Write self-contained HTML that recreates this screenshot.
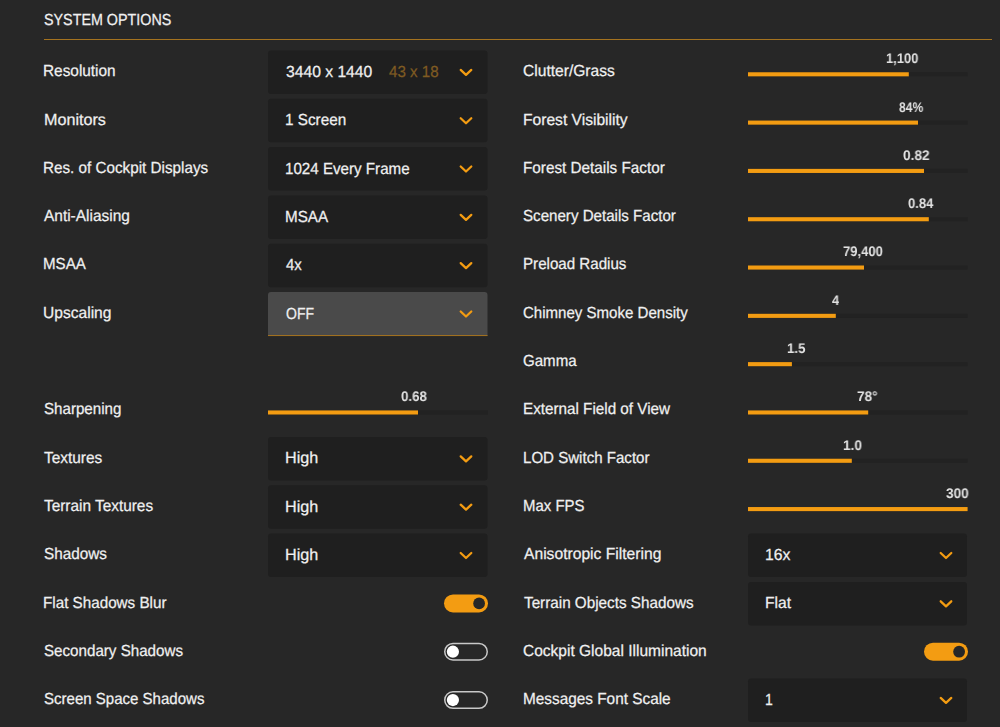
<!DOCTYPE html>
<html><head><meta charset="utf-8"><style>
html,body{margin:0;padding:0;}
body{width:1000px;height:727px;overflow:hidden;background:#272727;position:relative;font-family:"Liberation Sans",sans-serif;}
.t{position:absolute;line-height:20px;white-space:nowrap;transform-origin:0 0;}
</style></head><body>
<svg width="1000" height="727" viewBox="0 0 1000 727" style="position:absolute;left:0;top:0"><rect x="44" y="39" width="948" height="1" fill="#a5731f"/><rect x="268" y="50.50" width="219.5" height="43.5" rx="3" fill="#1f1f1f"/><polyline points="460.70,69.90 466.00,74.90 471.30,69.90" fill="none" stroke="#f39c12" stroke-width="2.25" stroke-linecap="round" stroke-linejoin="round"/><rect x="268" y="98.81" width="219.5" height="43.5" rx="3" fill="#1f1f1f"/><polyline points="460.70,118.21 466.00,123.21 471.30,118.21" fill="none" stroke="#f39c12" stroke-width="2.25" stroke-linecap="round" stroke-linejoin="round"/><rect x="268" y="147.12" width="219.5" height="43.5" rx="3" fill="#1f1f1f"/><polyline points="460.70,166.52 466.00,171.52 471.30,166.52" fill="none" stroke="#f39c12" stroke-width="2.25" stroke-linecap="round" stroke-linejoin="round"/><rect x="268" y="195.43" width="219.5" height="43.5" rx="3" fill="#1f1f1f"/><polyline points="460.70,214.83 466.00,219.83 471.30,214.83" fill="none" stroke="#f39c12" stroke-width="2.25" stroke-linecap="round" stroke-linejoin="round"/><rect x="268" y="243.74" width="219.5" height="43.5" rx="3" fill="#1f1f1f"/><polyline points="460.70,263.14 466.00,268.14 471.30,263.14" fill="none" stroke="#f39c12" stroke-width="2.25" stroke-linecap="round" stroke-linejoin="round"/><path d="M268,336.05 V295.05 Q268,292.05 271,292.05 H484.5 Q487.5,292.05 487.5,295.05 V336.05 Z" fill="#4a4a4a"/><rect x="268" y="335.05" width="219.5" height="1" fill="#a5731f"/><polyline points="460.70,311.45 466.00,316.45 471.30,311.45" fill="none" stroke="#f39c12" stroke-width="2.25" stroke-linecap="round" stroke-linejoin="round"/><rect x="268" y="410.42" width="220.00" height="4.1" fill="#222222"/><rect x="268" y="410.42" width="150.00" height="4.1" fill="#f39c12"/><rect x="268" y="436.98" width="219.5" height="43.5" rx="3" fill="#1f1f1f"/><polyline points="460.70,456.38 466.00,461.38 471.30,456.38" fill="none" stroke="#f39c12" stroke-width="2.25" stroke-linecap="round" stroke-linejoin="round"/><rect x="268" y="485.29" width="219.5" height="43.5" rx="3" fill="#1f1f1f"/><polyline points="460.70,504.69 466.00,509.69 471.30,504.69" fill="none" stroke="#f39c12" stroke-width="2.25" stroke-linecap="round" stroke-linejoin="round"/><rect x="268" y="533.60" width="219.5" height="43.5" rx="3" fill="#1f1f1f"/><polyline points="460.70,553.00 466.00,558.00 471.30,553.00" fill="none" stroke="#f39c12" stroke-width="2.25" stroke-linecap="round" stroke-linejoin="round"/><rect x="444" y="594.41" width="44" height="18" rx="9" fill="#f39c12"/><circle cx="479.10" cy="603.41" r="5.9" fill="#272727"/><rect x="444.75" y="643.47" width="42.5" height="16.5" rx="8.25" fill="#272727" stroke="#c8c8c8" stroke-width="1.5"/><circle cx="452.90" cy="651.72" r="6.1" fill="#fff"/><rect x="444.75" y="691.78" width="42.5" height="16.5" rx="8.25" fill="#272727" stroke="#c8c8c8" stroke-width="1.5"/><circle cx="452.90" cy="700.03" r="6.1" fill="#fff"/><rect x="748" y="72.25" width="219.60" height="4.1" fill="#222222"/><rect x="748" y="72.25" width="160.80" height="4.1" fill="#f39c12"/><rect x="748" y="120.56" width="219.60" height="4.1" fill="#222222"/><rect x="748" y="120.56" width="170.00" height="4.1" fill="#f39c12"/><rect x="748" y="168.87" width="219.60" height="4.1" fill="#222222"/><rect x="748" y="168.87" width="176.00" height="4.1" fill="#f39c12"/><rect x="748" y="217.18" width="219.60" height="4.1" fill="#222222"/><rect x="748" y="217.18" width="180.80" height="4.1" fill="#f39c12"/><rect x="748" y="265.49" width="219.60" height="4.1" fill="#222222"/><rect x="748" y="265.49" width="116.00" height="4.1" fill="#f39c12"/><rect x="748" y="313.80" width="219.60" height="4.1" fill="#222222"/><rect x="748" y="313.80" width="87.80" height="4.1" fill="#f39c12"/><rect x="748" y="362.11" width="219.60" height="4.1" fill="#222222"/><rect x="748" y="362.11" width="43.90" height="4.1" fill="#f39c12"/><rect x="748" y="410.42" width="219.60" height="4.1" fill="#222222"/><rect x="748" y="410.42" width="120.20" height="4.1" fill="#f39c12"/><rect x="748" y="458.73" width="219.60" height="4.1" fill="#222222"/><rect x="748" y="458.73" width="103.80" height="4.1" fill="#f39c12"/><rect x="748" y="507.04" width="219.60" height="4.1" fill="#222222"/><rect x="748" y="507.04" width="219.60" height="4.1" fill="#f39c12"/><rect x="748" y="533.60" width="219" height="43.5" rx="3" fill="#1f1f1f"/><polyline points="940.70,553.00 946.00,558.00 951.30,553.00" fill="none" stroke="#f39c12" stroke-width="2.25" stroke-linecap="round" stroke-linejoin="round"/><rect x="748" y="581.91" width="219" height="43.5" rx="3" fill="#1f1f1f"/><polyline points="940.70,601.31 946.00,606.31 951.30,601.31" fill="none" stroke="#f39c12" stroke-width="2.25" stroke-linecap="round" stroke-linejoin="round"/><rect x="924" y="642.72" width="44" height="18" rx="9" fill="#f39c12"/><circle cx="959.10" cy="651.72" r="5.9" fill="#272727"/><rect x="748" y="678.53" width="219" height="43.5" rx="3" fill="#1f1f1f"/><polyline points="940.70,697.93 946.00,702.93 951.30,697.93" fill="none" stroke="#f39c12" stroke-width="2.25" stroke-linecap="round" stroke-linejoin="round"/></svg>
<div class="t" style="left:44.00px;top:11px;font-size:16px;text-rendering:geometricPrecision;-webkit-text-stroke:0.25px;color:#f0f0f0;transform:scaleX(0.8950)">SYSTEM OPTIONS</div>
<div class="t" style="left:43.04px;top:62px;font-size:16px;text-rendering:geometricPrecision;-webkit-text-stroke:0.25px;color:#f0f0f0;transform:scaleX(0.9608)">Resolution</div>
<div class="t" style="left:286.00px;top:63px;font-size:16px;text-rendering:geometricPrecision;-webkit-text-stroke:0.25px;color:#f0f0f0;transform:scaleX(0.9795)">3440 x 1440</div>
<div class="t" style="left:389.05px;top:63px;font-size:16px;text-rendering:geometricPrecision;-webkit-text-stroke:0.25px;color:#7f5b22;transform:scaleX(0.9452)">43 x 18</div>
<div class="t" style="left:43.59px;top:111px;font-size:16px;text-rendering:geometricPrecision;-webkit-text-stroke:0.25px;color:#f0f0f0;transform:scaleX(1.0092)">Monitors</div>
<div class="t" style="left:285.20px;top:111px;font-size:16px;text-rendering:geometricPrecision;-webkit-text-stroke:0.25px;color:#f0f0f0;transform:scaleX(0.9548)">1 Screen</div>
<div class="t" style="left:43.05px;top:159px;font-size:16px;text-rendering:geometricPrecision;-webkit-text-stroke:0.25px;color:#f0f0f0;transform:scaleX(0.9523)">Res. of Cockpit Displays</div>
<div class="t" style="left:285.20px;top:160px;font-size:16px;text-rendering:geometricPrecision;-webkit-text-stroke:0.25px;color:#f0f0f0;transform:scaleX(0.9469)">1024 Every Frame</div>
<div class="t" style="left:44.25px;top:207px;font-size:16px;text-rendering:geometricPrecision;-webkit-text-stroke:0.25px;color:#f0f0f0;transform:scaleX(0.9653)">Anti-Aliasing</div>
<div class="t" style="left:285.45px;top:208px;font-size:16px;text-rendering:geometricPrecision;-webkit-text-stroke:0.25px;color:#f0f0f0;transform:scaleX(0.9511)">MSAA</div>
<div class="t" style="left:43.06px;top:255px;font-size:16px;text-rendering:geometricPrecision;-webkit-text-stroke:0.25px;color:#f0f0f0;transform:scaleX(0.9444)">MSAA</div>
<div class="t" style="left:286.30px;top:256px;font-size:16px;text-rendering:geometricPrecision;-webkit-text-stroke:0.25px;color:#f0f0f0;transform:scaleX(0.9353)">4x</div>
<div class="t" style="left:43.03px;top:304px;font-size:16px;text-rendering:geometricPrecision;-webkit-text-stroke:0.25px;color:#f0f0f0;transform:scaleX(0.9739)">Upscaling</div>
<div class="t" style="left:286.00px;top:305px;font-size:16px;text-rendering:geometricPrecision;-webkit-text-stroke:0.25px;color:#f0f0f0;transform:scaleX(0.8750)">OFF</div>
<div class="t" style="left:43.90px;top:400px;font-size:16px;text-rendering:geometricPrecision;-webkit-text-stroke:0.25px;color:#f0f0f0;transform:scaleX(0.9456)">Sharpening</div>
<div class="t" style="left:400.50px;top:386px;font-size:14px;font-weight:bold;text-rendering:geometricPrecision;will-change:transform;color:#e2e2e2;transform:scaleX(0.9481)">0.68</div>
<div class="t" style="left:43.90px;top:449px;font-size:16px;text-rendering:geometricPrecision;-webkit-text-stroke:0.25px;color:#f0f0f0;transform:scaleX(0.9633)">Textures</div>
<div class="t" style="left:285.29px;top:449px;font-size:16px;text-rendering:geometricPrecision;-webkit-text-stroke:0.25px;color:#f0f0f0;transform:scaleX(1.0097)">High</div>
<div class="t" style="left:43.90px;top:497px;font-size:16px;text-rendering:geometricPrecision;-webkit-text-stroke:0.25px;color:#f0f0f0;transform:scaleX(0.9611)">Terrain Textures</div>
<div class="t" style="left:285.29px;top:498px;font-size:16px;text-rendering:geometricPrecision;-webkit-text-stroke:0.25px;color:#f0f0f0;transform:scaleX(1.0097)">High</div>
<div class="t" style="left:43.89px;top:545px;font-size:16px;text-rendering:geometricPrecision;-webkit-text-stroke:0.25px;color:#f0f0f0;transform:scaleX(0.9562)">Shadows</div>
<div class="t" style="left:285.29px;top:546px;font-size:16px;text-rendering:geometricPrecision;-webkit-text-stroke:0.25px;color:#f0f0f0;transform:scaleX(1.0097)">High</div>
<div class="t" style="left:43.05px;top:594px;font-size:16px;text-rendering:geometricPrecision;-webkit-text-stroke:0.25px;color:#f0f0f0;transform:scaleX(0.9512)">Flat Shadows Blur</div>
<div class="t" style="left:43.90px;top:642px;font-size:16px;text-rendering:geometricPrecision;-webkit-text-stroke:0.25px;color:#f0f0f0;transform:scaleX(0.9469)">Secondary Shadows</div>
<div class="t" style="left:43.91px;top:690px;font-size:16px;text-rendering:geometricPrecision;-webkit-text-stroke:0.25px;color:#f0f0f0;transform:scaleX(0.9394)">Screen Space Shadows</div>
<div class="t" style="left:523.03px;top:62px;font-size:16px;text-rendering:geometricPrecision;-webkit-text-stroke:0.25px;color:#f0f0f0;transform:scaleX(0.9742)">Clutter/Grass</div>
<div class="t" style="left:885.73px;top:48px;font-size:14px;font-weight:bold;text-rendering:geometricPrecision;will-change:transform;color:#e2e2e2;transform:scaleX(0.9235)">1,100</div>
<div class="t" style="left:522.62px;top:111px;font-size:16px;text-rendering:geometricPrecision;-webkit-text-stroke:0.25px;color:#f0f0f0;transform:scaleX(0.9755)">Forest Visibility</div>
<div class="t" style="left:898.90px;top:97px;font-size:14px;font-weight:bold;text-rendering:geometricPrecision;will-change:transform;color:#e2e2e2;transform:scaleX(0.8679)">84%</div>
<div class="t" style="left:522.65px;top:159px;font-size:16px;text-rendering:geometricPrecision;-webkit-text-stroke:0.25px;color:#f0f0f0;transform:scaleX(0.9547)">Forest Details Factor</div>
<div class="t" style="left:903.10px;top:145px;font-size:14px;font-weight:bold;text-rendering:geometricPrecision;will-change:transform;color:#e2e2e2;transform:scaleX(0.9741)">0.82</div>
<div class="t" style="left:523.06px;top:207px;font-size:16px;text-rendering:geometricPrecision;-webkit-text-stroke:0.25px;color:#f0f0f0;transform:scaleX(0.9447)">Scenery Details Factor</div>
<div class="t" style="left:907.70px;top:193px;font-size:14px;font-weight:bold;text-rendering:geometricPrecision;will-change:transform;color:#e2e2e2;transform:scaleX(0.9296)">0.84</div>
<div class="t" style="left:522.65px;top:255px;font-size:16px;text-rendering:geometricPrecision;-webkit-text-stroke:0.25px;color:#f0f0f0;transform:scaleX(0.9454)">Preload Radius</div>
<div class="t" style="left:843.00px;top:241px;font-size:14px;font-weight:bold;text-rendering:geometricPrecision;will-change:transform;color:#e2e2e2;transform:scaleX(0.9310)">79,400</div>
<div class="t" style="left:523.06px;top:304px;font-size:16px;text-rendering:geometricPrecision;-webkit-text-stroke:0.25px;color:#f0f0f0;transform:scaleX(0.9402)">Chimney Smoke Density</div>
<div class="t" style="left:832.35px;top:290px;font-size:14px;font-weight:bold;text-rendering:geometricPrecision;will-change:transform;color:#e2e2e2;transform:scaleX(0.9188)">4</div>
<div class="t" style="left:523.06px;top:352px;font-size:16px;text-rendering:geometricPrecision;-webkit-text-stroke:0.25px;color:#f0f0f0;transform:scaleX(0.9411)">Gamma</div>
<div class="t" style="left:786.76px;top:338px;font-size:14px;font-weight:bold;text-rendering:geometricPrecision;will-change:transform;color:#e2e2e2;transform:scaleX(0.9444)">1.5</div>
<div class="t" style="left:522.65px;top:400px;font-size:16px;text-rendering:geometricPrecision;-webkit-text-stroke:0.25px;color:#f0f0f0;transform:scaleX(0.9519)">External Field of View</div>
<div class="t" style="left:857.10px;top:386px;font-size:14px;font-weight:bold;text-rendering:geometricPrecision;will-change:transform;color:#e2e2e2;transform:scaleX(0.9738)">78°</div>
<div class="t" style="left:522.66px;top:449px;font-size:16px;text-rendering:geometricPrecision;-webkit-text-stroke:0.25px;color:#f0f0f0;transform:scaleX(0.9421)">LOD Switch Factor</div>
<div class="t" style="left:842.68px;top:435px;font-size:14px;font-weight:bold;text-rendering:geometricPrecision;will-change:transform;color:#e2e2e2;transform:scaleX(0.9694)">1.0</div>
<div class="t" style="left:522.67px;top:497px;font-size:16px;text-rendering:geometricPrecision;-webkit-text-stroke:0.25px;color:#f0f0f0;transform:scaleX(0.9344)">Max FPS</div>
<div class="t" style="left:946.00px;top:483px;font-size:14px;font-weight:bold;text-rendering:geometricPrecision;will-change:transform;color:#e2e2e2;transform:scaleX(0.9739)">300</div>
<div class="t" style="left:523.60px;top:545px;font-size:16px;text-rendering:geometricPrecision;-webkit-text-stroke:0.25px;color:#f0f0f0;transform:scaleX(0.9779)">Anisotropic Filtering</div>
<div class="t" style="left:765.12px;top:546px;font-size:16px;text-rendering:geometricPrecision;-webkit-text-stroke:0.25px;color:#f0f0f0;transform:scaleX(0.9820)">16x</div>
<div class="t" style="left:523.50px;top:594px;font-size:16px;text-rendering:geometricPrecision;-webkit-text-stroke:0.25px;color:#f0f0f0;transform:scaleX(0.9534)">Terrain Objects Shadows</div>
<div class="t" style="left:765.42px;top:594px;font-size:16px;text-rendering:geometricPrecision;-webkit-text-stroke:0.25px;color:#f0f0f0;transform:scaleX(0.9769)">Flat</div>
<div class="t" style="left:523.03px;top:642px;font-size:16px;text-rendering:geometricPrecision;-webkit-text-stroke:0.25px;color:#f0f0f0;transform:scaleX(0.9697)">Cockpit Global Illumination</div>
<div class="t" style="left:522.64px;top:690px;font-size:16px;text-rendering:geometricPrecision;-webkit-text-stroke:0.25px;color:#f0f0f0;transform:scaleX(0.9595)">Messages Font Scale</div>
<div class="t" style="left:765.38px;top:691px;font-size:16px;text-rendering:geometricPrecision;-webkit-text-stroke:0.25px;color:#f0f0f0;transform:scaleX(0.8750)">1</div>
</body></html>
